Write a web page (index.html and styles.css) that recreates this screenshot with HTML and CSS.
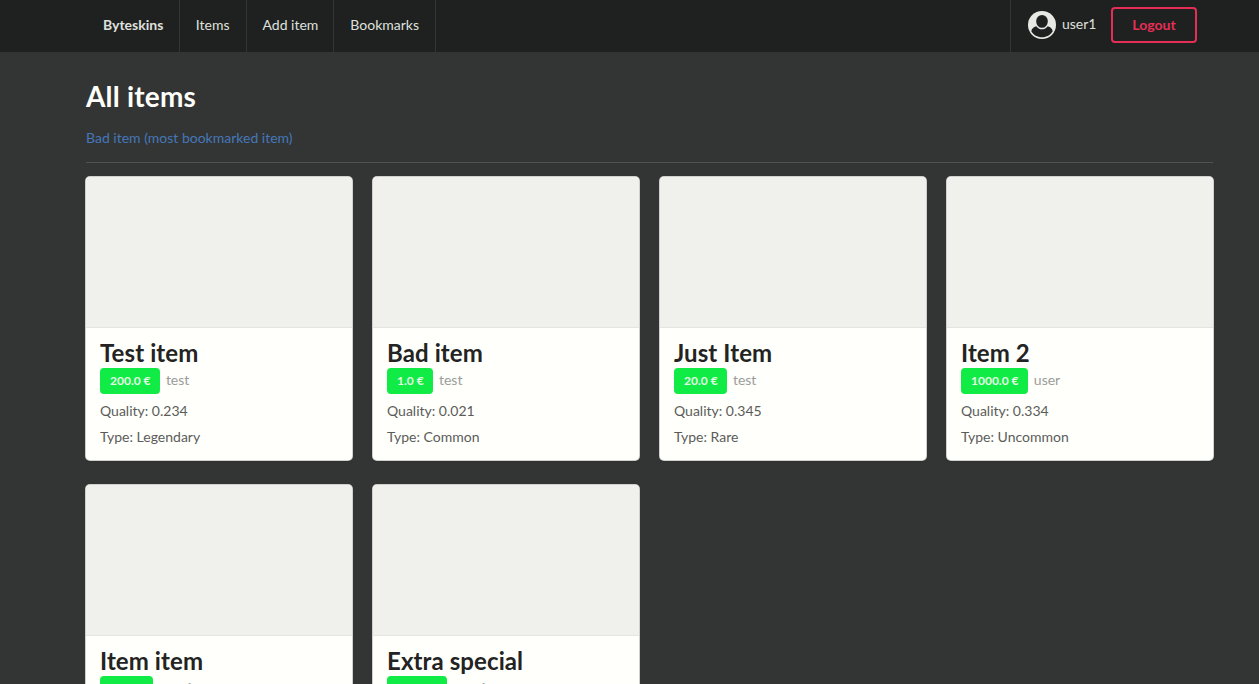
FILE: index.html
```
<!DOCTYPE html>
<html lang="en">
<head>
<meta charset="utf-8">
<title>Byteskins</title>
<link rel="stylesheet" href="styles.css">
</head>
<body>
<nav class="menu">
  <div class="container menu-row">
    <a class="menu-item brand">Byteskins</a>
    <a class="menu-item">Items</a>
    <a class="menu-item add">Add item</a>
    <a class="menu-item">Bookmarks</a>
    <div class="account">
      <svg class="avatar" viewBox="0 0 28 28" aria-hidden="true">
        <circle cx="14" cy="14" r="14" fill="#e8e9e4"/>
        <ellipse cx="14" cy="10.4" rx="5.8" ry="6.4" fill="#1f2120"/>
        <path d="M8.3 15.2C5.2 16 3.7 17.8 3.3 20.2C5.4 23.9 9.3 26.2 14 26.2S22.6 23.9 24.7 20.2C24.3 17.8 22.8 16 19.7 15.2C18.3 17.3 16.4 18.3 14 18.3S9.7 17.3 8.3 15.2Z" fill="#1f2120"/>
      </svg>
      <span class="username">user1</span>
      <button class="logout">Logout</button>
    </div>
  </div>
</nav>
<main class="container">
  <h1 class="heading">All items</h1>
  <a class="top-link">Bad item (most bookmarked item)</a>
  <hr class="divider">
  <section class="cards">
    <article class="card">
      <div class="image"></div>
      <div class="content"><h2 class="title">Test item</h2>
        <div class="meta"><span class="price">200.0 €</span><span>test</span></div>
        <p class="detail">Quality: 0.234</p><p class="detail">Type: Legendary</p></div>
    </article>
    <article class="card">
      <div class="image"></div>
      <div class="content"><h2 class="title">Bad item</h2>
        <div class="meta"><span class="price">1.0 €</span><span>test</span></div>
        <p class="detail">Quality: 0.021</p><p class="detail">Type: Common</p></div>
    </article>
    <article class="card">
      <div class="image"></div>
      <div class="content"><h2 class="title">Just Item</h2>
        <div class="meta"><span class="price">20.0 €</span><span>test</span></div>
        <p class="detail">Quality: 0.345</p><p class="detail">Type: Rare</p></div>
    </article>
    <article class="card">
      <div class="image"></div>
      <div class="content"><h2 class="title">Item 2</h2>
        <div class="meta"><span class="price">1000.0 €</span><span>user</span></div>
        <p class="detail">Quality: 0.334</p><p class="detail">Type: Uncommon</p></div>
    </article>
    <article class="card">
      <div class="image"></div>
      <div class="content"><h2 class="title">Item item</h2>
        <div class="meta"><span class="price">20.0 €</span><span>user1</span></div></div>
    </article>
    <article class="card">
      <div class="image"></div>
      <div class="content"><h2 class="title">Extra special</h2>
        <div class="meta"><span class="price">200.0 €</span><span>user1</span></div></div>
    </article>
  </section>
</main>
</body>
</html>
```
FILE: styles.css
```
* { box-sizing: border-box; }
html, body { height: 100%; }
body {
  margin: 0;
  overflow: hidden;
  background: #333534;
  font: 14px/20px Lato, sans-serif;
}
.container { width: 1127px; margin: 0 0 0 86px; }
.menu { height: 52px; background: #1f2120; }
.menu-row { display: flex; height: 52px; }
.menu-item {
  padding: 15px 16px 0;
  border-right: 1px solid #333534;
  color: #dfe0dd;
}
.brand { padding-left: 17px; padding-right: 15.5px; font-weight: 700; }
.add { padding-right: 15px; }
.account {
  display: flex;
  margin-left: auto;
  padding: 7px 16px 0 17px;
  border-left: 1px solid #333534;
}
.avatar { width: 28px; height: 28px; margin-top: 4px; }
.username { width: 35px; margin: 7px 14px 0 6px; color: #dfe0dd; }
.logout {
  width: 86px;
  height: 36px;
  padding: 0;
  border: 2px solid #e52e56;
  border-radius: 4px;
  background: none;
  color: #e52e56;
  font: 700 14px/20px Lato, sans-serif;
}
.heading {
  margin: 0;
  padding-top: 26px;
  color: #fffffb;
  font: 700 28px/36px Lato, sans-serif;
  letter-spacing: 0.2px;
}
.top-link { display: block; margin-top: 14px; color: #4577b9; }
.divider { height: 1px; margin: 14px 0; border: 0; background: #505251; }
.cards {
  display: grid;
  grid-template-columns: repeat(4, 266px);
  column-gap: 21px;
  row-gap: 25px;
}
.card {
  height: 283px;
  overflow: hidden;
  border-radius: 4px;
  background: #fffffb;
  box-shadow: 0 0 0 1px #d0d1ce, 0 2px 1px #2f3130;
}
.image { height: 150px; background: #f0f0ed; }
.content { padding: 10px 14px 14px; border-top: 1px solid #e4e4e0; }
.title {
  margin: 0 0 1px;
  color: #232323;
  font: 700 24px/29px Lato, sans-serif;
  letter-spacing: 0.1px;
}
.meta { display: flex; gap: 6px; height: 26px; line-height: 24px; color: #9b9c99; }
.price {
  padding: 0 9.3px 0 10px;
  border-radius: 4px;
  background: #10eb45;
  color: #e4fbe5;
  font-size: 12px;
  font-weight: 700;
  line-height: 26px;
}
.detail { margin: 7px 0 0; color: #5b5c5a; line-height: 20px; }
.detail + .detail { margin-top: 6px; }
```
